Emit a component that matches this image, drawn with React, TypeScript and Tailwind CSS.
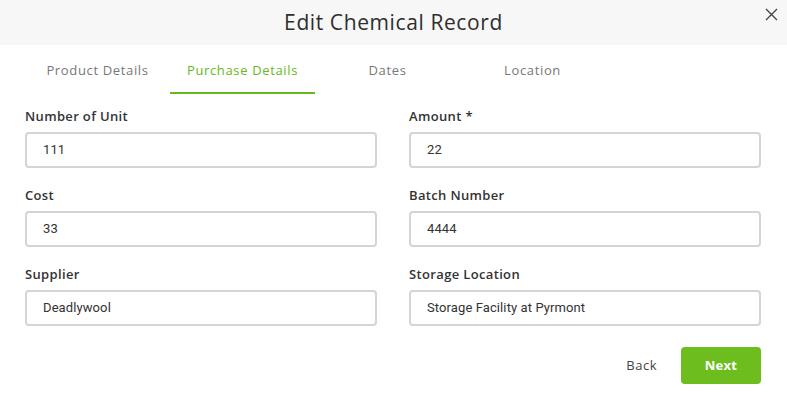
import React from "react";

const fields: [string, string][] = [
  ["Number of Unit", "111"],
  ["Amount *", "22"],
  ["Cost", "33"],
  ["Batch Number", "4444"],
  ["Supplier", "Deadlywool"],
  ["Storage Location", "Storage Facility at Pyrmont"],
];

const tabs = ["Product Details", "Purchase Details", "Dates", "Location"];

export default function App() {
  return (
    <div className="w-[787px] h-[396px] bg-white overflow-hidden" style={{ fontFamily: '"Open Sans", sans-serif' }}>
      <div className="relative h-[45px] bg-[#f7f7f7] flex items-center justify-center">
        <h1 className="text-[21px] text-[#2e2e2e] font-medium tracking-[0.6px]">Edit Chemical Record</h1>
        <button className="absolute right-[9px] top-[7px] w-[14px] h-[14px] flex items-center justify-center">
          <svg width="13" height="13" viewBox="0 0 13 13" fill="none" stroke="#444" strokeWidth="1.4">
            <path d="M1 1L12 12M12 1L1 12" />
          </svg>
        </button>
      </div>
      <div className="px-[25px] flex mt-[8px]">
        {tabs.map((t, i) => (
          <div
            key={t}
            className={`w-[145px] h-[41px] pb-[4px] flex items-center justify-center text-[13px] tracking-[0.65px] border-b-2 ${
              i === 1 ? "text-[#66b821] border-[#66b821]" : "text-[#777] border-transparent"
            }`}
          >
            {t}
          </div>
        ))}
      </div>
      <div className="pl-[25px] pt-[14px] grid grid-cols-2 gap-x-[32px] pr-[26px]">
        {fields.map(([label, value]) => (
          <div key={label} className="flex flex-col pb-[19px]">
            <label className="h-[16px] leading-[16px] text-[13px] font-semibold tracking-[0.35px] text-[#333]">{label}</label>
            <div
              className="mt-[8px] h-[36px] border-2 border-[#d4d4d4] rounded-[4px] flex items-center pl-[16px] text-[13px] tracking-[0.1px] text-[#333]"
              style={{ fontFamily: 'Roboto, sans-serif' }}
            >
              {value}
            </div>
          </div>
        ))}
      </div>
      <div className="flex justify-end items-center pr-[26px] mt-[2px] gap-[24px]">
        <button className="text-[13px] text-[#444] font-medium tracking-[0.5px]">Back</button>
        <button className="w-[80px] h-[37px] rounded-[4px] bg-[#6cbd1d] text-white text-[13px] font-bold tracking-[0.3px]">Next</button>
      </div>
    </div>
  );
}
